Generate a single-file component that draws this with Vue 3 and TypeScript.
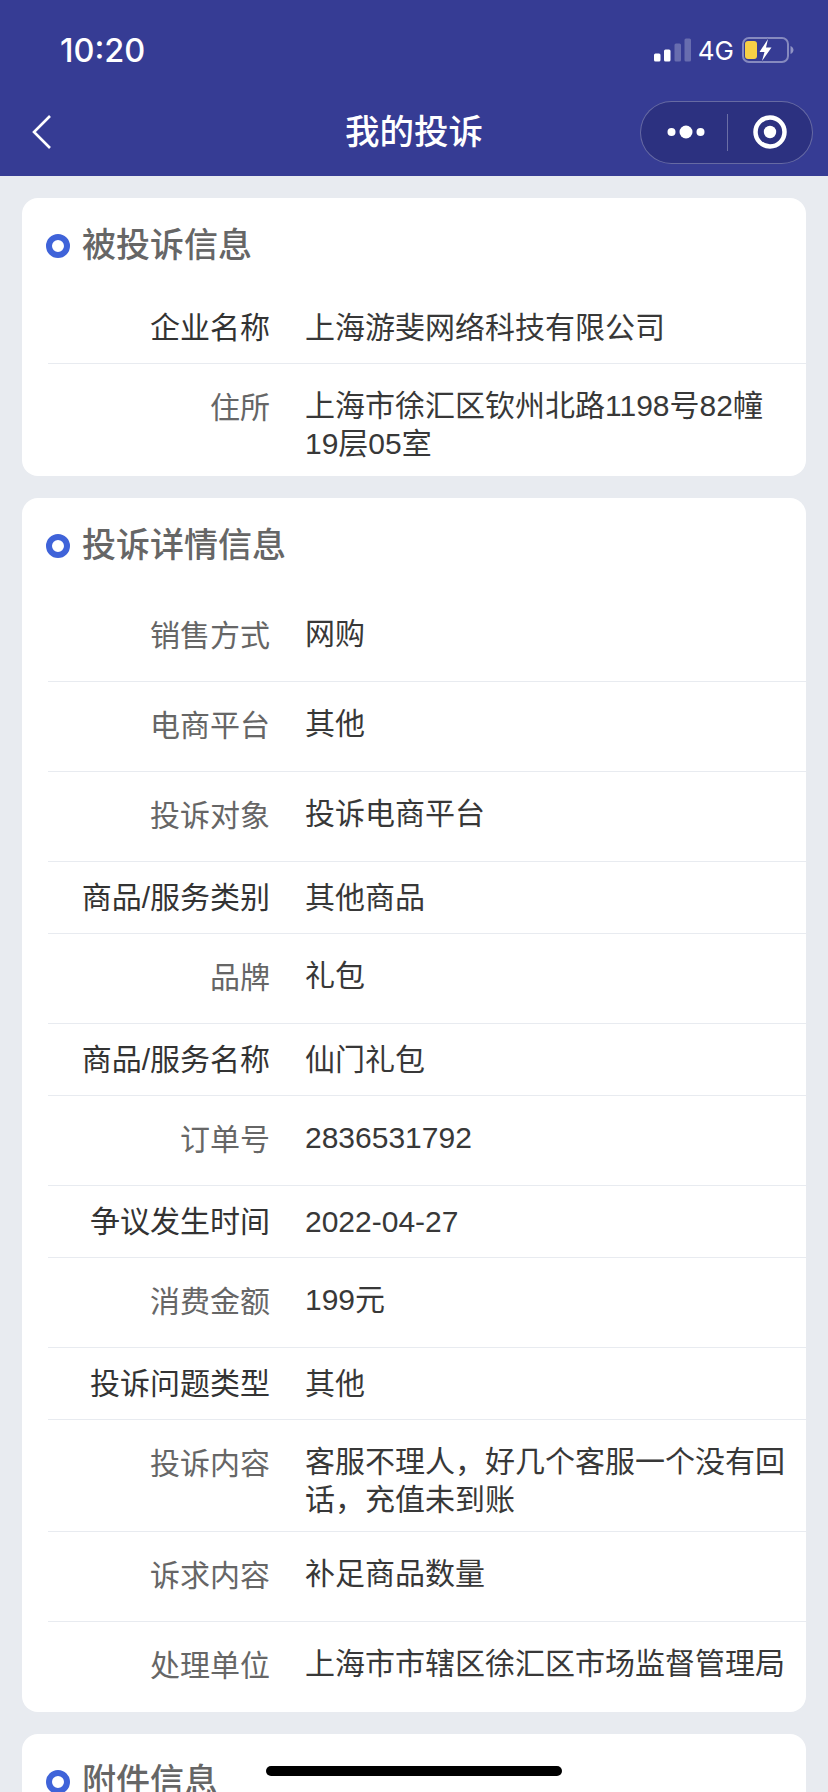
<script setup lang="ts">
interface Row {
	label: string
	lines: string
	tone: "dark" | "gray"
}

const companyRows: Row[] = [
	{label: "企业名称", lines: "上海游斐网络科技有限公司", tone: "dark"},
	{label: "住所", lines: "上海市徐汇区钦州北路1198号82幢19层05室", tone: "gray"}
]

const detailRows: Row[] = [
	{label: "销售方式", lines: "网购", tone: "gray"},
	{label: "电商平台", lines: "其他", tone: "gray"},
	{label: "投诉对象", lines: "投诉电商平台", tone: "gray"},
	{label: "商品/服务类别", lines: "其他商品", tone: "dark"},
	{label: "品牌", lines: "礼包", tone: "gray"},
	{label: "商品/服务名称", lines: "仙门礼包", tone: "dark"},
	{label: "订单号", lines: "2836531792", tone: "gray"},
	{label: "争议发生时间", lines: "2022-04-27", tone: "dark"},
	{label: "消费金额", lines: "199元", tone: "gray"},
	{label: "投诉问题类型", lines: "其他", tone: "dark"},
	{label: "投诉内容", lines: "客服不理人，好几个客服一个没有回话，充值未到账", tone: "gray"},
	{label: "诉求内容", lines: "补足商品数量", tone: "gray"},
	{label: "处理单位", lines: "上海市市辖区徐汇区市场监督管理局", tone: "gray"}
]

const sections = [
	{title: "被投诉信息", rows: companyRows},
	{title: "投诉详情信息", rows: detailRows},
	{title: "附件信息", rows: [] as Row[]}
]

function isLong(row: Row) {
	return row.lines.length > 16
}
</script>

<template>
	<div class="page">
		<header class="top">
			<div class="status">
				<span class="clock">10:20</span>
				<div class="status_right">
					<svg width="38" height="24" viewBox="0 0 38 24">
						<rect x="0" y="15.5" width="6.5" height="8" rx="1.5" fill="#fff"/>
						<rect x="10" y="11.5" width="6.5" height="12" rx="1.5" fill="#fff"/>
						<rect x="20.5" y="5.5" width="6.5" height="18" rx="1.5" fill="#fff" fill-opacity="0.25"/>
						<rect x="30.5" y="0.5" width="6.5" height="23" rx="1.5" fill="#fff" fill-opacity="0.25"/>
					</svg>
					<span class="net">4G</span>
					<svg width="52" height="26" viewBox="0 0 52 26">
						<rect x="1" y="1" width="45" height="24" rx="6" fill="none" stroke="#fff" stroke-opacity="0.4" stroke-width="2"/>
						<rect x="3" y="4" width="12" height="18" rx="3" fill="#f7d046"/>
						<path d="M48.5 9 C50.6 10 51.5 11.5 51.5 13 C51.5 14.5 50.6 16 48.5 17 Z" fill="#fff" fill-opacity="0.45"/>
						<path d="M26 2 L17.5 15 L22.5 15 L20 24 L29.5 10.5 L24 10.5 Z" fill="#fff" stroke="#363c94" stroke-width="1.5" paint-order="stroke"/>
					</svg>
				</div>
			</div>
			<nav class="nav">
				<svg class="back" width="20" height="34" viewBox="0 0 20 34">
					<path d="M18 1 L2 17 L18 33" fill="none" stroke="#fff" stroke-width="2.6"/>
				</svg>
				<h1>我的投诉</h1>
				<div class="capsule">
					<svg width="44" height="14" viewBox="0 0 44 14">
						<circle cx="4.5" cy="7" r="4" fill="#fff"/>
						<circle cx="19" cy="7" r="6.5" fill="#fff"/>
						<circle cx="33.5" cy="7" r="4" fill="#fff"/>
					</svg>
					<i class="divider"></i>
					<svg width="34" height="34" viewBox="0 0 34 34">
						<circle cx="17" cy="17" r="14.5" fill="none" stroke="#fff" stroke-width="4.5"/>
						<circle cx="17" cy="17" r="6.2" fill="#fff"/>
					</svg>
				</div>
			</nav>
		</header>

		<main class="list">
			<section class="card" v-for="section in sections" :key="section.title">
				<div class="card_title">
					<i class="ring"></i>
					<h2>{{ section.title }}</h2>
				</div>
				<div
					class="row"
					v-for="row in section.rows"
					:key="row.label"
					:class="[row.tone, {long: isLong(row)}]"
				>
					<span class="label">{{ row.label }}</span>
					<span class="value">{{ row.lines }}</span>
				</div>
			</section>
		</main>

		<div class="home_bar"></div>
	</div>
</template>

<style>
html, body {
	margin: 0;
	background: #e8ebf0;
}
</style>

<style scoped>
.page {
	position: relative;
	width: 828px;
	height: 1792px;
	overflow: hidden;
	background: #e8ebf0;
	font-family: "Liberation Sans", "Noto Sans CJK SC", sans-serif;
}

.top {
	height: 176px;
	background: #363c94;
	color: #fff;
}

.status {
	display: flex;
	justify-content: space-between;
	align-items: center;
	height: 100px;
	padding: 0 34px 0 60px;
	font-family: Inter, sans-serif;
}

.clock {
	font-size: 32.5px;
	font-weight: 500;
}

.status_right {
	display: flex;
	align-items: center;
	gap: 8px;
}

.net {
	margin-left: -2px;
	font-size: 26px;
	font-weight: 400;
}

.nav {
	display: grid;
	grid-template-columns: 1fr auto 1fr;
	align-items: center;
	height: 64px;
	padding: 0 15px;
}

.back {
	display: block;
	margin-left: 17px;
}

.nav h1 {
	margin: 0;
	font-size: 34.5px;
	font-weight: 500;
	line-height: 64px;
}

.capsule {
	justify-self: end;
	box-sizing: border-box;
	display: flex;
	align-items: center;
	width: 173px;
	height: 63px;
	padding-left: 26px;
	background: #2c3180;
	border: 1px solid rgba(255, 255, 255, 0.28);
	border-radius: 32px;
}

.divider {
	width: 1px;
	height: 37px;
	margin: 0 25px 0 16px;
	background: rgba(255, 255, 255, 0.3);
}

.list {
	display: flex;
	flex-direction: column;
	gap: 22px;
	padding: 22px 22px 0 22px;
}

.card {
	padding-left: 26px;
	background: #fff;
	border-radius: 16px;
}

.card_title {
	display: flex;
	align-items: center;
	gap: 12px;
	height: 94px;
	margin-left: -2px;
}

.ring {
	box-sizing: border-box;
	width: 24px;
	height: 24px;
	margin-top: 2px;
	border: 6px solid #3f63d9;
	border-radius: 50%;
}

.card_title h2 {
	margin: 0;
	font-size: 34px;
	font-weight: 500;
	color: #666;
	line-height: 40px;
}

.row {
	display: flex;
	gap: 35px;
	padding: 23px 0 28px;
	font-size: 30px;
	line-height: 38px;
	border-bottom: 1px solid #e8ebf0;
}

.row:last-child {
	padding-bottom: 29px;
	border-bottom: none;
}

.row.dark {
	padding: 17px 0 16px;
}

.row.long {
	padding: 23px 0 12px;
}

.row.long:last-child {
	padding-bottom: 13px;
}

.label {
	flex: 0 0 222px;
	text-align: right;
	color: #666;
}

.gray .label {
	padding-top: 2px;
	margin-bottom: -2px;
}

.dark .label {
	color: #333;
}

.value {
	flex: 0 0 485px;
	color: #383838;
}

.home_bar {
	position: absolute;
	left: 266px;
	top: 1766px;
	width: 296px;
	height: 10px;
	background: #000;
	border-radius: 5px;
}
</style>
